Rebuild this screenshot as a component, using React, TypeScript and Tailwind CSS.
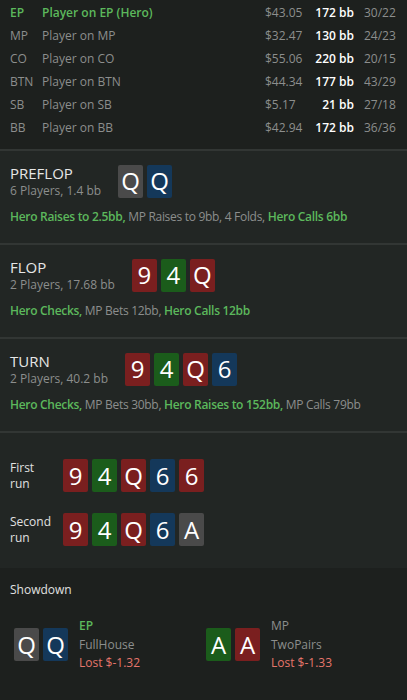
import React from "react";

type C = { r: string; c: "red" | "green" | "blue" | "grey" };

const bg: Record<string, string> = {
  red: "bg-[#7a1f1f]",
  green: "bg-[#1b5c1b]",
  blue: "bg-[#14385a]",
  grey: "bg-[#4a4a4a]",
};

function Card({ r, c }: C) {
  return (
    <div
      className={`${bg[c]} w-[25px] h-[33px] rounded-[2px] flex items-center justify-center text-white text-[24px] leading-none`}
    >
      {r}
    </div>
  );
}

function Cards({ cards }: { cards: C[] }) {
  return (
    <div className="flex gap-[4px]">
      {cards.map((c, i) => (
        <Card key={i} {...c} />
      ))}
    </div>
  );
}

const players = [
  { pos: "EP", name: "Player on EP (Hero)", money: "$43.05", bb: "172 bb", stat: "30/22", hero: true },
  { pos: "MP", name: "Player on MP", money: "$32.47", bb: "130 bb", stat: "24/23" },
  { pos: "CO", name: "Player on CO", money: "$55.06", bb: "220 bb", stat: "20/15" },
  { pos: "BTN", name: "Player on BTN", money: "$44.34", bb: "177 bb", stat: "43/29" },
  { pos: "SB", name: "Player on SB", money: "$5.17", bb: "21 bb", stat: "27/18" },
  { pos: "BB", name: "Player on BB", money: "$42.94", bb: "172 bb", stat: "36/36" },
];

type A = { t: string; h?: boolean };

function Street({ title, sub, cards, actions }: { title: string; sub: string; cards: C[]; actions: A[] }) {
  return (
    <div className="bg-[#222624] border-t-2 border-[#323634] px-[10px] pt-[12px] h-[94px]">
      <div className="flex items-center">
        <div className="mr-[17px] pt-[1px]">
          <div className="text-[15px] leading-[19px] text-[#e6e6e6]">{title}</div>
          <div className="text-[12px] leading-[16px] text-[#8c8e8d]">{sub}</div>
        </div>
        <Cards cards={cards} />
      </div>
      <div className="mt-[10px] text-[12px] leading-[16px] text-[#8c8e8d] tracking-[-0.3px]">
        {actions.map((a, i) => (
          <span key={i} className={a.h ? "text-[#5cb85c] font-semibold" : ""}>
            {a.t}
            {i < actions.length - 1 ? ", " : ""}
          </span>
        ))}
      </div>
    </div>
  );
}

const R = (r: string): C => ({ r, c: "red" });
const G = (r: string): C => ({ r, c: "green" });
const B = (r: string): C => ({ r, c: "blue" });
const Y = (r: string): C => ({ r, c: "grey" });

export default function App() {
  return (
    <div
      className="w-[407px] h-[700px] bg-[#1d201e] overflow-hidden"
      style={{ fontFamily: '"Open Sans", "Noto Sans", sans-serif' }}
    >
      <div className="pt-[1px] pb-[10px]">
        {players.map((p) => (
          <div key={p.pos} className="flex items-center h-[23px] text-[12px] px-[10px]">
            <div className={`w-[32px] ${p.hero ? "text-[#5cb85c] font-semibold" : "text-[#8c8e8d]"}`}>{p.pos}</div>
            <div className={`w-[223px] ${p.hero ? "text-[#5cb85c] font-semibold" : "text-[#8c8e8d]"}`}>{p.name}</div>
            <div className="w-[44px] text-[#8c8e8d]">{p.money}</div>
            <div className="w-[45px] text-right text-white font-semibold">{p.bb}</div>
            <div className="ml-[10px] text-[#8c8e8d]">{p.stat}</div>
          </div>
        ))}
      </div>
      <Street
        title="PREFLOP"
        sub="6 Players, 1.4 bb"
        cards={[Y("Q"), B("Q")]}
        actions={[
          { t: "Hero Raises to 2.5bb", h: true },
          { t: "MP Raises to 9bb" },
          { t: "4 Folds" },
          { t: "Hero Calls 6bb", h: true },
        ]}
      />
      <Street
        title="FLOP"
        sub="2 Players, 17.68 bb"
        cards={[R("9"), G("4"), R("Q")]}
        actions={[{ t: "Hero Checks", h: true }, { t: "MP Bets 12bb" }, { t: "Hero Calls 12bb", h: true }]}
      />
      <Street
        title="TURN"
        sub="2 Players, 40.2 bb"
        cards={[R("9"), G("4"), R("Q"), B("6")]}
        actions={[
          { t: "Hero Checks", h: true },
          { t: "MP Bets 30bb" },
          { t: "Hero Raises to 152bb", h: true },
          { t: "MP Calls 79bb" },
        ]}
      />
      <div className="bg-[#222624] border-t-2 border-[#323634] h-[137px] px-[10px] pt-[26px] flex flex-col gap-[21px]">
        <div className="flex items-center">
          <div className="w-[53px] text-[12px] leading-[16px] text-[#e0e0e0]">First<br />run</div>
          <Cards cards={[R("9"), G("4"), R("Q"), B("6"), R("6")]} />
        </div>
        <div className="flex items-center">
          <div className="w-[53px] text-[12px] leading-[16px] text-[#e0e0e0]">Second<br />run</div>
          <Cards cards={[R("9"), G("4"), R("Q"), B("6"), Y("A")]} />
        </div>
      </div>
      <div className="px-[10px] pt-[14px]">
        <div className="text-[12px] leading-[16px] text-[#e0e0e0]">Showdown</div>
        <div className="flex mt-[19px] pl-[4px]">
          <div className="flex items-center w-[192px]">
            <Cards cards={[Y("Q"), B("Q")]} />
            <div className="ml-[11px] text-[12px] leading-[18.5px]">
              <div className="text-[#5cb85c] font-semibold">EP</div>
              <div className="text-[#8c8e8d]">FullHouse</div>
              <div className="text-[#e5766b]">Lost $-1.32</div>
            </div>
          </div>
          <div className="flex items-center">
            <Cards cards={[G("A"), R("A")]} />
            <div className="ml-[11px] text-[12px] leading-[18.5px]">
              <div className="text-[#8c8e8d]">MP</div>
              <div className="text-[#8c8e8d]">TwoPairs</div>
              <div className="text-[#e5766b]">Lost $-1.33</div>
            </div>
          </div>
        </div>
      </div>
    </div>
  );
}
